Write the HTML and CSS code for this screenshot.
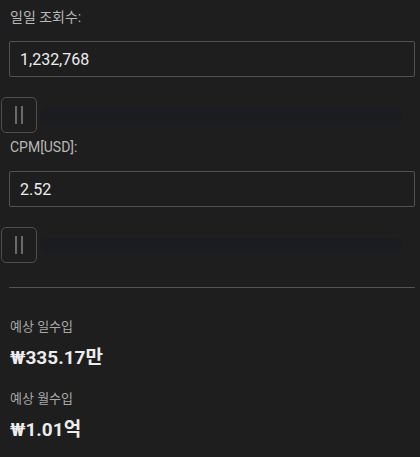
FILE: index.html
```html
<!DOCTYPE html>
<html lang="ko">
<head>
    <meta charset="UTF-8">
    <meta name="viewport" content="width=device-width, initial-scale=1.0">
    <title>수익 계산기</title>
    <link rel="stylesheet" href="styles.css">
</head>
<body>
    <div class="calc">
        <label class="field-label" for="views">일일 조회수:</label>
        <input class="field-input" id="views" type="text" value="1,232,768">
        <div class="slider">
            <div class="thumb"><span></span><span></span></div>
            <div class="track"></div>
        </div>

        <label class="field-label" for="cpm">CPM[USD]:</label>
        <input class="field-input" id="cpm" type="text" value="2.52">
        <div class="slider">
            <div class="thumb"><span></span><span></span></div>
            <div class="track"></div>
        </div>

        <hr class="divider">

        <div class="result">
            <div class="result-label">예상 일수입</div>
            <div class="result-value">₩335.17만</div>
        </div>
        <div class="result">
            <div class="result-label">예상 월수입</div>
            <div class="result-value">₩1.01억</div>
        </div>
    </div>
</body>
</html>
```

FILE: styles.css
```css
body {
    margin: 0;
    padding: 0;
    background-color: #1e1e1e;
    color: #e6e6e6;
    font-family: Roboto, "Noto Sans CJK KR", sans-serif;
}
.calc {
    display: flex;
    flex-direction: column;
    padding: 7px 5px 0 9px;
}
.field-label {
    font-size: 14px;
    line-height: 20px;
    color: #b8b8b8;
    padding-left: 1px;
}
.field-label + .field-input {
    margin-top: 14px;
}
.field-input {
    box-sizing: border-box;
    height: 36px;
    margin: 0;
    padding: 0 10px;
    background: #1e1e1e;
    border: 1px solid #505050;
    border-radius: 2px;
    color: #ececec;
    font-family: Roboto, sans-serif;
    font-size: 16px;
    outline: none;
}
.slider {
    display: flex;
    align-items: center;
    margin: 20px 0 4px -8px;
}
.thumb {
    box-sizing: border-box;
    width: 36px;
    height: 36px;
    border: 1px solid #4e4e4e;
    border-radius: 5px;
    display: flex;
    justify-content: center;
    align-items: center;
    gap: 4px;
}
.thumb span {
    width: 2px;
    height: 18px;
    background: #6a6a6a;
}
.track {
    flex: 1;
    height: 15px;
    margin: 0 13px 0 3px;
    border-radius: 8px;
    background: #1b1c22;
}
.divider {
    margin: 20px 0 0;
    border: none;
    border-top: 1px solid #555;
    height: 0;
}
.result {
    padding-left: 1px;
}
.divider + .result {
    margin-top: 30px;
}
.result + .result {
    margin-top: 20px;
}
.result-label {
    font-size: 13px;
    line-height: 18px;
    color: #a8a8a8;
}
.result-value {
    margin-top: 10px;
    font-size: 19px;
    line-height: 24px;
    font-weight: bold;
    color: #ececec;
}
```
